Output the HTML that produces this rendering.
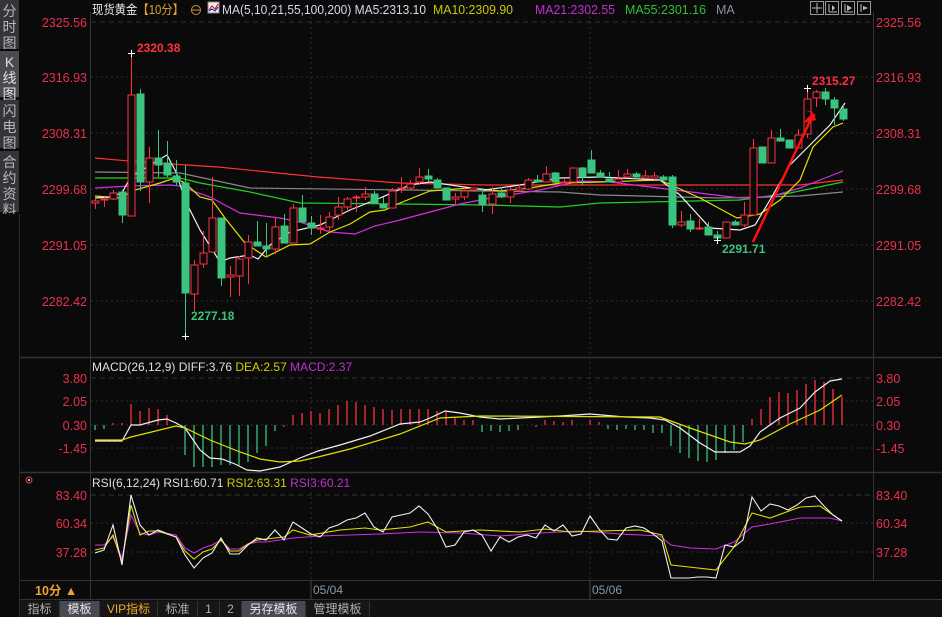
<!DOCTYPE html>
<html><head><meta charset="utf-8">
<style>
html,body{margin:0;padding:0;background:#0a0a0a;width:942px;height:617px;overflow:hidden;font-family:"Liberation Sans","Noto Sans CJK SC",sans-serif;}
.side{position:absolute;left:0;width:19px;background:#34353a;color:#b8b8b8;font-size:14px;line-height:16px;text-align:center;border-bottom:2px solid #0a0a0a;box-sizing:border-box;padding-top:3px}
.tab{position:absolute;top:601px;height:16px;font-size:12px;line-height:16px;text-align:center;color:#b0b0b0;background:#161616;border-right:1px solid #333}
svg text{font-family:"Liberation Sans","Noto Sans CJK SC",sans-serif}
</style></head><body>
<div class="side" style="top:0;height:51px">分<br>时<br>图</div>
<div class="side" style="top:51px;height:48px;background:#4a4b52;color:#e0e0e0">K<br>线<br>图</div>
<div class="side" style="top:100px;height:50px">闪<br>电<br>图</div>
<div class="side" style="top:151px;height:63px">合<br>约<br>资<br>料</div>
<div style="position:absolute;left:0;top:214px;width:19px;height:403px;background:#0a0a0a;border-right:1px solid #2a2a2a"></div>

<svg width="942" height="617" style="position:absolute;left:0;top:0" xmlns="http://www.w3.org/2000/svg">
<line x1="90.5" y1="12" x2="90.5" y2="580" stroke="#333"/>
<line x1="873.5" y1="12" x2="873.5" y2="580" stroke="#333"/>
<line x1="20" y1="357.5" x2="942" y2="357.5" stroke="#333" stroke-width="1.5"/>
<line x1="20" y1="472.5" x2="942" y2="472.5" stroke="#333" stroke-width="1.5"/>
<line x1="20" y1="580.5" x2="942" y2="580.5" stroke="#333"/>
<line x1="20" y1="599.5" x2="942" y2="599.5" stroke="#333"/>
<g stroke="#2e2e2e" stroke-dasharray="2,3">
<line x1="91" y1="22" x2="873" y2="22" stroke-dasharray="5,4" stroke="#333"/>
<line x1="91" y1="77" x2="873" y2="77"/><line x1="91" y1="133" x2="873" y2="133"/><line x1="91" y1="189" x2="873" y2="189"/><line x1="91" y1="245" x2="873" y2="245"/><line x1="91" y1="301" x2="873" y2="301"/>
<line x1="91" y1="378" x2="873" y2="378" stroke-dasharray="5,4" stroke="#333"/><line x1="91" y1="401" x2="873" y2="401"/><line x1="91" y1="425" x2="873" y2="425"/><line x1="91" y1="448" x2="873" y2="448"/>
<line x1="91" y1="495" x2="873" y2="495" stroke-dasharray="5,4" stroke="#333"/><line x1="91" y1="523" x2="873" y2="523"/><line x1="91" y1="552" x2="873" y2="552"/>
<line x1="311" y1="12" x2="311" y2="580"/><line x1="590" y1="12" x2="590" y2="580"/>
</g>
<line x1="311" y1="580" x2="311" y2="599" stroke="#444"/><line x1="590" y1="580" x2="590" y2="599" stroke="#444"/>
<line x1="90.5" y1="580" x2="90.5" y2="599" stroke="#333"/>

<g fill="#e8304a" font-size="12.5" text-anchor="end">
<text x="87" y="27">2325.56</text><text x="87" y="82">2316.93</text><text x="87" y="138">2308.31</text><text x="87" y="194">2299.68</text><text x="87" y="250">2291.05</text><text x="87" y="306">2282.42</text>
<text x="87" y="383">3.80</text><text x="87" y="406">2.05</text><text x="87" y="430">0.30</text><text x="87" y="453">-1.45</text>
<text x="87" y="500">83.40</text><text x="87" y="528">60.34</text><text x="87" y="557">37.28</text>
</g>
<g fill="#e8304a" font-size="12.5">
<text x="876" y="27">2325.56</text><text x="876" y="82">2316.93</text><text x="876" y="138">2308.31</text><text x="876" y="194">2299.68</text><text x="876" y="250">2291.05</text><text x="876" y="306">2282.42</text>
<text x="876" y="383">3.80</text><text x="876" y="406">2.05</text><text x="876" y="430">0.30</text><text x="876" y="453">-1.45</text>
<text x="876" y="500">83.40</text><text x="876" y="528">60.34</text><text x="876" y="557">37.28</text>
</g>

<text x="92" y="14" font-size="12.5" fill="#e8e8e8" textLength="92" lengthAdjust="spacingAndGlyphs">现货黄金<tspan fill="#e8a030">【10分】</tspan></text>
<circle cx="196" cy="10" r="4.5" fill="none" stroke="#c89030"/><line x1="191.5" y1="10" x2="200.5" y2="10" stroke="#c89030"/>
<rect x="208" y="2" width="11" height="11" fill="#eee" stroke="#888"/><polyline points="209,10 212,6 215,9 218,4" fill="none" stroke="#d00" stroke-width="1"/><polyline points="209,11 212,9 215,11 218,7" fill="none" stroke="#00d"/>
<text x="222" y="14" font-size="12.5" fill="#d8d8e8" textLength="204" lengthAdjust="spacingAndGlyphs">MA(5,10,21,55,100,200) MA5:2313.10</text>
<text x="433" y="14" font-size="12.5" fill="#c8c800" textLength="80" lengthAdjust="spacingAndGlyphs">MA10:2309.90</text>
<text x="535" y="14" font-size="12.5" fill="#c030d0" textLength="80" lengthAdjust="spacingAndGlyphs">MA21:2302.55</text>
<text x="625" y="14" font-size="12.5" fill="#30c030" textLength="81" lengthAdjust="spacingAndGlyphs">MA55:2301.16</text>
<text x="716" y="14" font-size="12.5" fill="#8890a0">MA</text>
<g fill="none" stroke="#999">
<rect x="810.5" y="1.5" width="13" height="13"/><rect x="825.5" y="1.5" width="13" height="13"/><rect x="841.5" y="1.5" width="13" height="13"/><rect x="857.5" y="1.5" width="13" height="13"/>
</g>
<g stroke="#bbb"><line x1="817" y1="3" x2="817" y2="13"/><line x1="812" y1="8" x2="822" y2="8"/><line x1="829" y1="4" x2="829" y2="12"/><line x1="829" y1="12" x2="837" y2="12"/><line x1="845" y1="4" x2="845" y2="12"/><line x1="845" y1="12" x2="853" y2="12"/><line x1="861" y1="4" x2="861" y2="12"/></g>
<polygon points="847,5 852,8 847,11" fill="#bbb"/><polygon points="832,5 835,8 832,11" fill="#bbb"/><polygon points="863,6 868,8 863,10" fill="#bbb"/>

<g fill="none" stroke-width="1.2">
<polyline stroke="#ff3030" points="95,158 140,162 218,167 318,177 400,183 485,185 800,185 843,180"/>
<polyline stroke="#888" points="95,172 180,173 250,188 485,191 560,192 600,195 720,198 800,196 843,192"/>
<polyline stroke="#20d020" points="95,178 180,178 200,183 250,192 300,203 400,204 485,205 560,207 600,203 740,200 790,193 843,182"/>
<polyline stroke="#d030e0" points="95,188 130,186 170,185 180,186 190,190 210,197 240,213 280,218 300,222 330,232 355,234 375,226 400,220 430,212 460,204 485,199 540,190 580,181 610,182 650,187 740,198 770,197 800,188 820,180 843,171"/>
<polyline stroke="#e0e000" points="95,196 120,198 135,190 160,183 175,178 185,183 200,197 212,200 225,218 245,243 266,257 290,245 310,244 330,232 350,224 370,212 385,210 400,203 430,191 470,188 500,191 530,188 560,183 600,182 660,180 700,198 737,218 760,214 780,200 800,180 813,147 833,127 843,123"/>
<polyline stroke="#f0f0f0" points="95,198 110,197 122,193 130,178 150,165 167,155 176,172 185,200 200,230 220,262 230,258 250,255 258,259 270,245 290,232 320,225 330,220 350,210 380,198 410,185 430,182 485,190 520,185 560,178 600,177 660,180 680,195 710,228 740,230 755,225 770,200 790,165 810,145 830,125 845,103"/>
</g>

<g stroke="#ff3040" fill="#0a0a0a" stroke-width="1">
<line x1="95.5" y1="198" x2="95.5" y2="209"/><rect x="92" y="201" width="7" height="2"/>
<line x1="104.5" y1="197" x2="104.5" y2="207"/><rect x="101" y="199" width="7" height="1"/>
<line x1="113.5" y1="190" x2="113.5" y2="200"/><rect x="110" y="193" width="7" height="6"/>
<line x1="131.5" y1="53" x2="131.5" y2="216"/><rect x="128" y="95" width="7" height="121"/>
<line x1="149.5" y1="147" x2="149.5" y2="203"/><rect x="146" y="158" width="7" height="24"/>
<line x1="194.5" y1="260" x2="194.5" y2="311"/><rect x="191" y="265" width="7" height="29"/>
<line x1="203.5" y1="231" x2="203.5" y2="268"/><rect x="200" y="253" width="7" height="11"/>
<line x1="212.5" y1="177" x2="212.5" y2="252"/><rect x="209" y="218" width="7" height="34"/>
<line x1="230.5" y1="266" x2="230.5" y2="297"/><rect x="227" y="275" width="7" height="2"/>
<line x1="239.5" y1="256" x2="239.5" y2="296"/><rect x="236" y="259" width="7" height="17"/>
<line x1="248.5" y1="235" x2="248.5" y2="284"/><rect x="245" y="242" width="7" height="16"/>
<line x1="275.5" y1="217" x2="275.5" y2="254"/><rect x="272" y="227" width="7" height="22"/>
<line x1="293.5" y1="204" x2="293.5" y2="243"/><rect x="290" y="208" width="7" height="35"/>
<line x1="320.5" y1="215" x2="320.5" y2="234"/><rect x="317" y="228" width="7" height="1"/>
<line x1="329.5" y1="212" x2="329.5" y2="232"/><rect x="326" y="217" width="7" height="10"/>
<line x1="338.5" y1="197" x2="338.5" y2="220"/><rect x="335" y="207" width="7" height="8"/>
<line x1="347.5" y1="197" x2="347.5" y2="210"/><rect x="344" y="199" width="7" height="8"/>
<line x1="356.5" y1="195" x2="356.5" y2="212"/><rect x="353" y="197" width="7" height="1"/>
<line x1="365.5" y1="187" x2="365.5" y2="200"/><rect x="362" y="194" width="7" height="3"/>
<line x1="392.5" y1="188" x2="392.5" y2="208"/><rect x="389" y="191" width="7" height="17"/>
<line x1="401.5" y1="177" x2="401.5" y2="193"/><rect x="398" y="188" width="7" height="1"/>
<line x1="410.5" y1="180" x2="410.5" y2="190"/><rect x="407" y="184" width="7" height="4"/>
<line x1="419.5" y1="168" x2="419.5" y2="185"/><rect x="416" y="177" width="7" height="5"/>
<line x1="455.5" y1="193" x2="455.5" y2="205"/><rect x="452" y="197" width="7" height="2"/>
<line x1="464.5" y1="188" x2="464.5" y2="200"/><rect x="461" y="191" width="7" height="6"/>
<line x1="473.5" y1="188" x2="473.5" y2="192"/><rect x="470" y="188" width="7" height="2"/>
<line x1="492.5" y1="187" x2="492.5" y2="214"/><rect x="489" y="194" width="7" height="10"/>
<line x1="510.5" y1="187" x2="510.5" y2="203"/><rect x="507" y="190" width="7" height="7"/>
<line x1="519.5" y1="184" x2="519.5" y2="192"/><rect x="516" y="188" width="7" height="2"/>
<line x1="528.5" y1="178" x2="528.5" y2="190"/><rect x="525" y="180" width="7" height="9"/>
<line x1="546.5" y1="166" x2="546.5" y2="182"/><rect x="543" y="174" width="7" height="8"/>
<line x1="564.5" y1="178" x2="564.5" y2="183"/><rect x="561" y="182" width="7" height="1"/>
<line x1="573.5" y1="168" x2="573.5" y2="182"/><rect x="570" y="168" width="7" height="14"/>
<line x1="618.5" y1="170" x2="618.5" y2="183"/><rect x="615" y="179" width="7" height="3"/>
<line x1="627.5" y1="169" x2="627.5" y2="178"/><rect x="624" y="174" width="7" height="3"/>
<line x1="645.5" y1="170" x2="645.5" y2="179"/><rect x="642" y="176" width="7" height="2"/>
<line x1="654.5" y1="172" x2="654.5" y2="180"/><rect x="651" y="176" width="7" height="2"/>
<line x1="681.5" y1="211" x2="681.5" y2="227"/><rect x="678" y="222" width="7" height="3"/>
<line x1="699.5" y1="219" x2="699.5" y2="230"/><rect x="696" y="228" width="7" height="1"/>
<line x1="726.5" y1="222" x2="726.5" y2="238"/><rect x="723" y="222" width="7" height="16"/>
<line x1="744.5" y1="202" x2="744.5" y2="227"/><rect x="741" y="215" width="7" height="10"/>
<line x1="753.5" y1="139" x2="753.5" y2="215"/><rect x="750" y="148" width="7" height="67"/>
<line x1="771.5" y1="130" x2="771.5" y2="163"/><rect x="768" y="138" width="7" height="25"/>
<line x1="798.5" y1="129" x2="798.5" y2="148"/><rect x="795" y="135" width="7" height="13"/>
<line x1="807.5" y1="88" x2="807.5" y2="138"/><rect x="804" y="99" width="7" height="35"/>
<line x1="816.5" y1="90" x2="816.5" y2="107"/><rect x="813" y="92" width="7" height="6"/>
</g>
<g stroke="#3ac47f" fill="#3ac47f" stroke-width="1">
<line x1="122.5" y1="190" x2="122.5" y2="223"/><rect x="119" y="192" width="7" height="23"/>
<line x1="140.5" y1="89" x2="140.5" y2="191"/><rect x="137" y="94" width="7" height="88"/>
<line x1="158.5" y1="130" x2="158.5" y2="177"/><rect x="155" y="158" width="7" height="7"/>
<line x1="167.5" y1="141" x2="167.5" y2="177"/><rect x="164" y="163" width="7" height="12"/>
<line x1="176.5" y1="160" x2="176.5" y2="185"/><rect x="173" y="176" width="7" height="6"/>
<line x1="185.5" y1="165" x2="185.5" y2="337"/><rect x="182" y="183" width="7" height="110"/>
<line x1="221.5" y1="218" x2="221.5" y2="286"/><rect x="218" y="218" width="7" height="60"/>
<line x1="257.5" y1="221" x2="257.5" y2="246"/><rect x="254" y="242" width="7" height="4"/>
<line x1="266.5" y1="223" x2="266.5" y2="257"/><rect x="263" y="246" width="7" height="3"/>
<line x1="284.5" y1="214" x2="284.5" y2="243"/><rect x="281" y="226" width="7" height="17"/>
<line x1="302.5" y1="195" x2="302.5" y2="222"/><rect x="299" y="208" width="7" height="14"/>
<line x1="311.5" y1="216" x2="311.5" y2="235"/><rect x="308" y="223" width="7" height="5"/>
<line x1="374.5" y1="191" x2="374.5" y2="203"/><rect x="371" y="194" width="7" height="9"/>
<line x1="383.5" y1="197" x2="383.5" y2="208"/><rect x="380" y="204" width="7" height="4"/>
<line x1="428.5" y1="169" x2="428.5" y2="182"/><rect x="425" y="176" width="7" height="3"/>
<line x1="437.5" y1="178" x2="437.5" y2="188"/><rect x="434" y="180" width="7" height="8"/>
<line x1="446.5" y1="188" x2="446.5" y2="200"/><rect x="443" y="188" width="7" height="12"/>
<line x1="482.5" y1="188" x2="482.5" y2="212"/><rect x="479" y="195" width="7" height="10"/>
<line x1="501.5" y1="187" x2="501.5" y2="198"/><rect x="498" y="193" width="7" height="4"/>
<line x1="537.5" y1="175" x2="537.5" y2="182"/><rect x="534" y="180" width="7" height="2"/>
<line x1="555.5" y1="172" x2="555.5" y2="183"/><rect x="552" y="173" width="7" height="9"/>
<line x1="582.5" y1="167" x2="582.5" y2="185"/><rect x="579" y="168" width="7" height="9"/>
<line x1="591.5" y1="150" x2="591.5" y2="173"/><rect x="588" y="160" width="7" height="13"/>
<line x1="600.5" y1="170" x2="600.5" y2="177"/><rect x="597" y="173" width="7" height="4"/>
<line x1="609.5" y1="172" x2="609.5" y2="182"/><rect x="606" y="179" width="7" height="3"/>
<line x1="636.5" y1="172" x2="636.5" y2="179"/><rect x="633" y="174" width="7" height="3"/>
<line x1="663.5" y1="175" x2="663.5" y2="182"/><rect x="660" y="177" width="7" height="3"/>
<line x1="672.5" y1="175" x2="672.5" y2="228"/><rect x="669" y="177" width="7" height="48"/>
<line x1="690.5" y1="214" x2="690.5" y2="232"/><rect x="687" y="221" width="7" height="8"/>
<line x1="708.5" y1="222" x2="708.5" y2="235"/><rect x="705" y="227" width="7" height="8"/>
<line x1="717.5" y1="231" x2="717.5" y2="241"/><rect x="714" y="235" width="7" height="3"/>
<line x1="735.5" y1="220" x2="735.5" y2="225"/><rect x="732" y="222" width="7" height="3"/>
<line x1="762.5" y1="147" x2="762.5" y2="163"/><rect x="759" y="147" width="7" height="16"/>
<line x1="780.5" y1="129" x2="780.5" y2="141"/><rect x="777" y="138" width="7" height="3"/>
<line x1="789.5" y1="140" x2="789.5" y2="148"/><rect x="786" y="140" width="7" height="8"/>
<line x1="825.5" y1="88" x2="825.5" y2="105"/><rect x="822" y="92" width="7" height="7"/>
<line x1="834.5" y1="97" x2="834.5" y2="125"/><rect x="831" y="100" width="7" height="8"/>
<line x1="843.5" y1="105" x2="843.5" y2="121"/><rect x="840" y="109" width="7" height="10"/>
</g>
<g stroke="#fff"><line x1="128" y1="53.5" x2="135" y2="53.5"/><line x1="182" y1="336.5" x2="189" y2="336.5"/><line x1="185.5" y1="333" x2="185.5" y2="340"/><line x1="714" y1="240.5" x2="721" y2="240.5"/><line x1="717.5" y1="237" x2="717.5" y2="244"/><line x1="804" y1="88.5" x2="811" y2="88.5"/><line x1="807.5" y1="85" x2="807.5" y2="92"/><line x1="131.5" y1="50" x2="131.5" y2="57"/></g>
<g font-size="12" font-weight="bold">
<text x="137" y="52" fill="#ff3040">2320.38</text>
<text x="191" y="320" fill="#3ac47f">2277.18</text>
<text x="722" y="253" fill="#3ac47f">2291.71</text>
<text x="812" y="85" fill="#ff3040">2315.27</text>
</g>
<line x1="753" y1="242" x2="810" y2="121" stroke="#ff1010" stroke-width="2.5"/>
<polygon points="805,110 816,115 804,122 813,112" fill="#ff1010"/>
<polygon points="803,123 814,113 816,120" fill="#ff1010"/>

<text x="92" y="371" font-size="12" fill="#e0e0e0">MACD(26,12,9) DIFF:3.76 <tspan fill="#d0d000">DEA:2.57</tspan> <tspan fill="#c030d0">MACD:2.37</tspan></text>
<g stroke="#3ac47f" stroke-width="1.3">
<line x1="95" y1="425" x2="95" y2="430"/><line x1="104" y1="425" x2="104" y2="429"/>
<line x1="185" y1="425" x2="185" y2="455"/><line x1="194" y1="425" x2="194" y2="467"/><line x1="203" y1="425" x2="203" y2="467"/><line x1="212" y1="425" x2="212" y2="467"/><line x1="221" y1="425" x2="221" y2="465"/><line x1="230" y1="425" x2="230" y2="465"/><line x1="239" y1="425" x2="239" y2="465"/><line x1="248" y1="425" x2="248" y2="462"/><line x1="257" y1="425" x2="257" y2="453"/><line x1="266" y1="425" x2="266" y2="446"/><line x1="275" y1="425" x2="275" y2="431"/>
<line x1="482" y1="425" x2="482" y2="432"/><line x1="491" y1="425" x2="491" y2="431"/><line x1="500" y1="425" x2="500" y2="432"/><line x1="509" y1="425" x2="509" y2="431"/><line x1="518" y1="425" x2="518" y2="430"/>
<line x1="608" y1="425" x2="608" y2="429"/><line x1="617" y1="425" x2="617" y2="430"/><line x1="626" y1="425" x2="626" y2="429"/><line x1="635" y1="425" x2="635" y2="430"/><line x1="644" y1="425" x2="644" y2="430"/><line x1="653" y1="425" x2="653" y2="433"/><line x1="662" y1="425" x2="662" y2="433"/>
<line x1="671" y1="425" x2="671" y2="446"/><line x1="680" y1="425" x2="680" y2="453"/><line x1="689" y1="425" x2="689" y2="458"/><line x1="698" y1="425" x2="698" y2="461"/><line x1="707" y1="425" x2="707" y2="462"/><line x1="716" y1="425" x2="716" y2="460"/><line x1="725" y1="425" x2="725" y2="453"/><line x1="734" y1="425" x2="734" y2="450"/><line x1="743" y1="425" x2="743" y2="442"/>
</g>
<g stroke="#ff3040" stroke-width="1.3">
<line x1="113" y1="425" x2="113" y2="423"/><line x1="122" y1="425" x2="122" y2="423"/>
<line x1="131" y1="425" x2="131" y2="404"/><line x1="140" y1="425" x2="140" y2="411"/><line x1="149" y1="425" x2="149" y2="408"/><line x1="158" y1="425" x2="158" y2="409"/><line x1="167" y1="425" x2="167" y2="415"/>
<line x1="284" y1="425" x2="284" y2="427"/><line x1="293" y1="425" x2="293" y2="415"/><line x1="302" y1="425" x2="302" y2="413"/><line x1="311" y1="425" x2="311" y2="411"/><line x1="320" y1="425" x2="320" y2="413"/><line x1="329" y1="425" x2="329" y2="409"/><line x1="338" y1="425" x2="338" y2="405"/><line x1="347" y1="425" x2="347" y2="401"/><line x1="356" y1="425" x2="356" y2="402"/><line x1="365" y1="425" x2="365" y2="405"/><line x1="374" y1="425" x2="374" y2="407"/><line x1="383" y1="425" x2="383" y2="409"/><line x1="392" y1="425" x2="392" y2="410"/><line x1="401" y1="425" x2="401" y2="409"/><line x1="410" y1="425" x2="410" y2="409"/><line x1="419" y1="425" x2="419" y2="409"/><line x1="428" y1="425" x2="428" y2="409"/><line x1="437" y1="425" x2="437" y2="411"/><line x1="446" y1="425" x2="446" y2="411"/><line x1="455" y1="425" x2="455" y2="418"/><line x1="464" y1="425" x2="464" y2="420"/><line x1="473" y1="425" x2="473" y2="420"/>
<line x1="536" y1="425" x2="536" y2="427"/><line x1="545" y1="425" x2="545" y2="420"/><line x1="554" y1="425" x2="554" y2="421"/><line x1="563" y1="425" x2="563" y2="422"/><line x1="572" y1="425" x2="572" y2="420"/><line x1="590" y1="425" x2="590" y2="420"/><line x1="599" y1="425" x2="599" y2="422"/>
<line x1="752" y1="425" x2="752" y2="419"/><line x1="761" y1="425" x2="761" y2="409"/><line x1="770" y1="425" x2="770" y2="397"/><line x1="779" y1="425" x2="779" y2="392"/><line x1="788" y1="425" x2="788" y2="393"/><line x1="797" y1="425" x2="797" y2="390"/><line x1="806" y1="425" x2="806" y2="384"/><line x1="815" y1="425" x2="815" y2="380"/><line x1="824" y1="425" x2="824" y2="382"/><line x1="833" y1="425" x2="833" y2="389"/><line x1="842" y1="425" x2="842" y2="397"/>
</g>
<g fill="none" stroke-width="1.2">
<polyline stroke="#f0f0f0" points="95,441 122,441 131,425 140,425 158,420 167,419 176,423 185,428 200,450 210,458 222,459 235,464 247,470 260,471 280,467 300,458 318,451 340,445 370,436 400,424 420,422 430,418 445,411 460,413 480,417 500,419 540,417 560,416 590,414 625,417 650,418 665,420 680,428 700,443 715,452 740,452 750,446 760,432 780,418 800,408 815,392 830,381 842,379"/>
<polyline stroke="#e0e000" points="95,440 122,440 131,437 176,426 185,428 210,440 240,452 260,459 280,462 300,461 318,457 350,449 400,434 440,418 480,416 660,417 690,428 730,442 745,444 760,440 790,424 820,410 842,395"/>
</g>

<circle cx="29" cy="480" r="3" fill="none" stroke="#e04040"/><circle cx="29" cy="480" r="1" fill="#fff"/>
<text x="92" y="487" font-size="12" fill="#e0e0e0">RSI(6,12,24) RSI1:60.71 <tspan fill="#d0d000">RSI2:63.31</tspan> <tspan fill="#c030d0">RSI3:60.21</tspan></text>
<g fill="none" stroke-width="1.1">
<polyline stroke="#d030e0" points="95,545 104,545 113,537 122,558 131,515 140,533 149,535 158,532 176,535 185,548 194,553 203,548 212,545 221,540 230,549 239,549 248,544 257,542 266,542 293,538 320,536 350,535 380,534 420,532 460,533 500,536 540,533 580,531 620,534 660,536 671,545 690,548 716,549 734,542 752,527 770,524 800,518 830,518 842,521"/>
<polyline stroke="#e0e000" points="95,550 104,548 113,535 122,562 131,505 140,535 149,531 158,531 176,537 185,551 194,559 203,552 212,549 221,540 230,551 239,551 248,544 257,540 266,539 284,537 293,530 310,535 340,530 365,528 380,530 410,527 428,522 446,532 480,530 520,532 545,529 570,532 600,531 640,530 662,535 671,565 689,567 716,570 734,547 752,513 770,518 800,507 820,506 842,521"/>
<polyline stroke="#f0f0f0" points="95,553 104,550 113,525 122,565 131,495 140,525 149,535 158,530 176,537 185,555 194,568 203,558 212,553 221,538 230,554 239,554 248,545 257,538 266,540 275,530 284,540 293,522 302,528 311,534 320,537 329,528 338,525 347,520 356,518 365,513 374,527 383,532 392,517 401,515 410,513 419,506 428,514 437,528 446,547 455,545 464,532 473,530 482,535 491,551 500,537 509,542 518,537 527,535 536,538 545,525 554,531 563,525 572,536 581,534 590,516 599,529 608,539 617,540 626,528 635,526 644,528 653,534 662,541 671,578 680,578 689,578 698,577 707,577 716,578 725,545 734,547 743,540 752,497 761,511 770,504 779,506 788,510 797,505 806,498 815,496 824,506 833,515 842,521"/>
</g>

<text x="35" y="595" font-size="12.5" font-weight="bold" fill="#f0a030">10分 ▲</text>
<text x="313" y="594" font-size="12" fill="#8a98b0">05/04</text>
<text x="592" y="594" font-size="12" fill="#8a98b0">05/06</text>
</svg>

<div style="position:absolute;left:20px;top:600px;width:922px;height:17px;background:#111"></div>
<div class="tab" style="left:20px;width:39px">指标</div>
<div class="tab" style="left:60px;width:39px;background:#474953;color:#e8e8e8">模板</div>
<div class="tab" style="left:100px;width:57px;color:#f0a830">VIP指标</div>
<div class="tab" style="left:158px;width:39px">标准</div>
<div class="tab" style="left:198px;width:21px">1</div>
<div class="tab" style="left:220px;width:21px">2</div>
<div class="tab" style="left:242px;width:63px;background:#474953;color:#e8e8e8">另存模板</div>
<div class="tab" style="left:306px;width:63px">管理模板</div>
</body></html>
